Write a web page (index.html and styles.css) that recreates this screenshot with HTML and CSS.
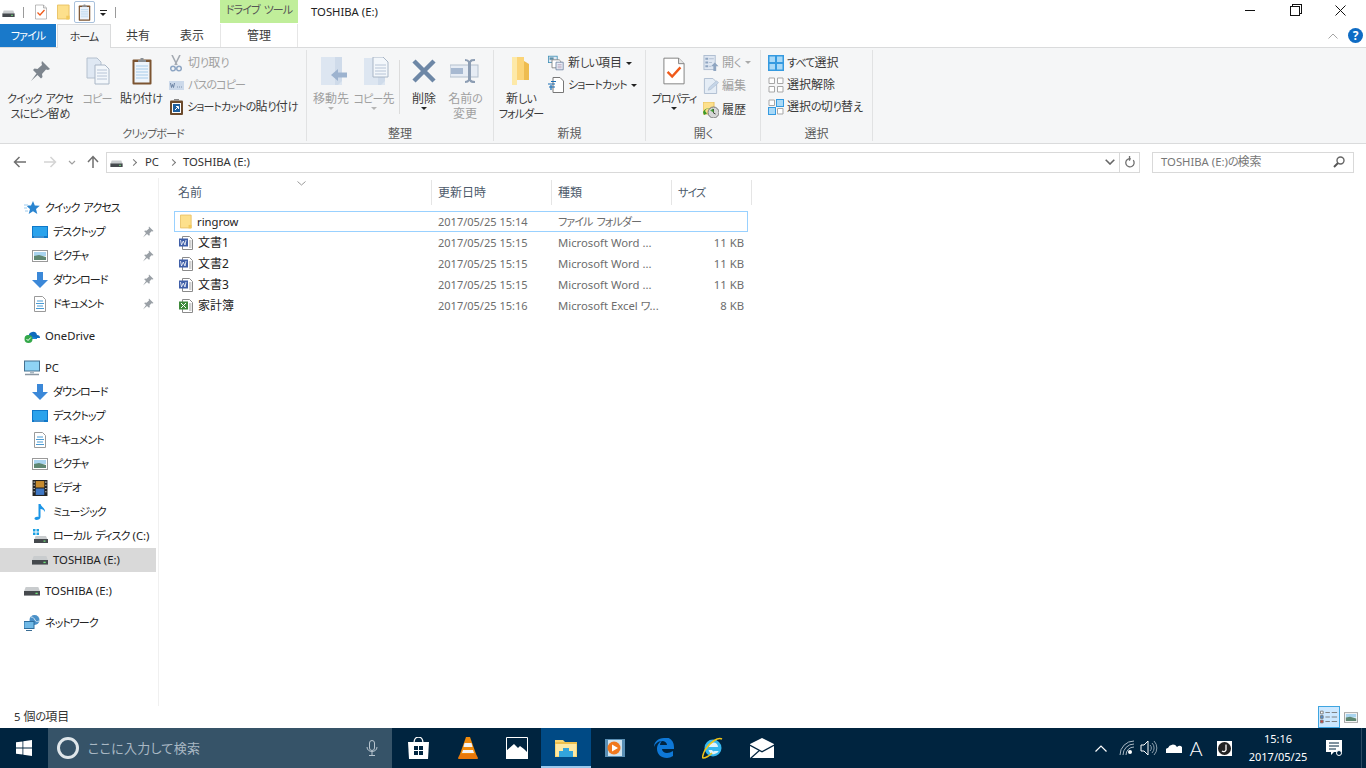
FILE: index.html
```html
<!DOCTYPE html>
<html lang="ja">
<head>
<meta charset="utf-8">
<title>TOSHIBA (E:)</title>
<link rel="stylesheet" href="styles.css">
</head>
<body>
<svg class="sprite" aria-hidden="true">
  <symbol id="drive" viewBox="0 0 14 8"><path d="M1.500 0.500h11l1.500 4H0z" fill="#c9ccce"/><rect y="4" width="14" height="4" fill="#45494d"/><rect x="10" y="5.500" width="2" height="1.200" fill="#6fe07a"/></symbol>
  <symbol id="props" viewBox="0 0 24 30"><path d="M1 1h16l6 6v22H1z" fill="#fff" stroke="#7b7b7b"/><path d="M17 1v6h6" fill="#e8e8e8" stroke="#7b7b7b"/><path d="M5 16l5 5 9-10" fill="none" stroke="#f05a1a" stroke-width="2.600"/></symbol>
  <symbol id="folder" viewBox="0 0 14 16"><path d="M.5.500h12.500v15H.5z" fill="#fde08c" stroke="#e8c060"/><path d="M10 16v-4h3.500v4z" fill="#f2c95c"/></symbol>
  <symbol id="clip" viewBox="0 0 20 28"><rect x=".5" y="2.500" width="19" height="25" rx="1" fill="#7c5431"/><rect x="2.500" y="5" width="15" height="20.500" fill="#eef5fc"/><path d="M4 9h12M4 12h12M4 15h12M4 18h12M4 21h12" stroke="#a6cbe9"/><path d="M6 5V3h2.500V1h3v2H14v2z" fill="#8a8f94"/></symbol>
  <symbol id="pin" viewBox="0 0 22 22"><path d="M13 1l8 8-2 1-2-.5-4 4.500.5 3-1.500 1.500-3.500-3.500L2 21l5.500-7.500L4 10l1.500-1.500 3 .5L13 5l-.5-2z" fill="#7d858e"/></symbol>
  <symbol id="smallpin" viewBox="0 0 12 12"><path d="M7 .5l4.500 4.500-1 .5-1-.3-2 2.300.3 1.500-.8.8L5 8 1 11.500 4 7 2.200 5.200 3 4.400l1.500.3L7 2.500 6.700 1.500z" fill="#9aa0a6"/></symbol>
  <symbol id="copy" viewBox="0 0 24 28"><path d="M1 1h10l4 4v16H1z" fill="#dfe8f3" stroke="#b4c0ce"/><path d="M9 8h10l4 4v15H9z" fill="#f3f7fb" stroke="#a9b6c6"/><path d="M11 13h10M11 16h10M11 19h10M11 22h10" stroke="#b7c4d6"/></symbol>
  <symbol id="scissors" viewBox="0 0 12 17"><path d="M2 0l5 10M10 0L5 10" stroke="#a4aab2" stroke-width="1.600" fill="none"/><circle cx="3" cy="13.500" r="2.300" fill="none" stroke="#8ea6c4" stroke-width="1.500"/><circle cx="9" cy="13.500" r="2.300" fill="none" stroke="#8ea6c4" stroke-width="1.500"/></symbol>
  <symbol id="pathcopy" viewBox="0 0 15 9"><rect width="15" height="9" fill="#ccd9ea"/><path d="M1.500 2l1 4.500 1-3 1 3 1-4.500M8 6h.8M10 6h.8M12 6h.8" stroke="#6d84a4" fill="none"/></symbol>
  <symbol id="shortcut" viewBox="0 0 13 16"><rect y="1.500" width="13" height="14.500" rx="1" fill="#6b4a2c"/><rect x="2" y="4" width="9" height="10" fill="#fff"/><path d="M4 1.500V0h5v1.500z" fill="#888"/><rect x="3" y="5" width="7" height="8" fill="#1d5f9f"/><path d="M5 11l3-3M6 7.500h2.500V10" stroke="#fff" fill="none"/></symbol>
  <symbol id="move" viewBox="0 0 26 28"><rect width="21" height="28" fill="#dde6f1"/><path d="M21 0v24l-4 4H14V0z" fill="#cfdbea"/><path d="M10 18l7-6v3.500h9v5h-9V24z" fill="#9db3cf"/></symbol>
  <symbol id="copyto" viewBox="0 0 26 28"><rect y="1" width="21" height="27" fill="#dde6f1"/><path d="M21 1v23l-4 4H14V1z" fill="#cfdbea"/><path d="M9 0h10l5 5v15H9z" fill="#f3f7fb" stroke="#a9b6c6"/><path d="M11 8h11M11 11h11M11 14h11M11 17h11" stroke="#b7c4d6"/></symbol>
  <symbol id="del" viewBox="0 0 26 26"><path d="M3 3l20 20M23 3L3 23" stroke="#6d87a6" stroke-width="4.500"/></symbol>
  <symbol id="rename" viewBox="0 0 30 26"><rect y="7" width="28" height="12" fill="#e6ecf4" stroke="#b4c0ce"/><rect x="1" y="10" width="12" height="6" fill="#a7b9d1"/><path d="M15 2c2 0 3 0 4 2v18c-1 2-2 2-4 2M25 2c-3 0-4 0-5 2v18c1 2 2 2 5 2" stroke="#8c9db3" stroke-width="2" fill="none"/></symbol>
  <symbol id="newfolder" viewBox="0 0 19 28"><path d="M1 0h12v20l5-1v4H5L1 28z" fill="#fbd477"/><path d="M1 0h5v28H1z" fill="#fde9a8"/><path d="M13 4l5 3v16h-5z" fill="#eebc4f"/></symbol>
  <symbol id="newitem" viewBox="0 0 20 18"><rect x=".5" y=".5" width="11" height="8" fill="#dfeaf5" stroke="#3f8fb6"/><rect x="2" y="2" width="5" height="3" fill="#5d8fa8"/><path d="M5 5h9l2 2v8H5z" fill="#fff" stroke="#777"/><path d="M10 8h9v9.500h-9z" fill="#e8eef6" stroke="#6a7fa0"/><path d="M12 11h5M12 13h5M12 15h5" stroke="#b7a0b7"/></symbol>
  <symbol id="scut" viewBox="0 0 16 16"><path d="M5 .5h7l3.500 3.500v11.500H5z" fill="#fff" stroke="#777"/><path d="M0 7h7M1 10h6M3 4.500h5M3 13v-5" stroke="#1b6fb5" stroke-width="1.200" fill="none"/></symbol>
  <symbol id="open" viewBox="0 0 16 17"><rect x=".5" y=".5" width="12" height="15" fill="#dfe7f2" stroke="#aebdd0"/><path d="M2 3h3v2H2zM2 7h3v2H2zM2 11h3v2H2z" fill="#8fa5c1"/><path d="M6 4h5M6 8h3M6 12h2" stroke="#aebdd0"/><path d="M12 8l4 4h-2.500v5h-3v-5H8z" fill="#8fa5c1"/></symbol>
  <symbol id="edit" viewBox="0 0 16 17"><path d="M1 .5h9l4 4v12H1z" fill="#e5edf6" stroke="#aebdd0"/><path d="M5 13l1-3 8-7 2 2-8 7z" fill="#c5d5e8" stroke="#aebdd0" stroke-width=".7"/></symbol>
  <symbol id="history" viewBox="0 0 16 16"><rect width="11" height="12" fill="#fde08c" stroke="#e8c060"/><circle cx="10.500" cy="10.500" r="5.500" fill="#d6d6d6" stroke="#777"/><path d="M10.500 7v4l2 1" stroke="#444" fill="none"/><path d="M2 9a4 4 0 0 1 7-1l-2 .5 4 2-1-4-1 1A6 6 0 0 0 0 10l1 3 3-1.500z" fill="#3c9a2c"/></symbol>
  <symbol id="selall" viewBox="0 0 16 16"><rect width="16" height="16" fill="#359ae0"/><path d="M1.500 1.500h5.500v5.500H1.500zM9 1.500h5.500v5.500H9zM1.500 9h5.500v5.500H1.500zM9 9h5.500v5.500H9z" fill="#a9d9f7"/></symbol>
  <symbol id="selnone" viewBox="0 0 16 16"><path d="M1 1h5.500v5.500H1zM9.500 1H15v5.500H9.500zM1 9.500h5.500V15H1zM9.500 9.500H15V15H9.500z" fill="#fff" stroke="#a7a7a7"/></symbol>
  <symbol id="selinv" viewBox="0 0 16 16"><path d="M1 1h5.500v5.500H1z" fill="#fff" stroke="#a7a7a7"/><rect x="8.500" y=".5" width="7" height="7" fill="#a9d9f7" stroke="#359ae0"/><rect x=".5" y="8.500" width="7" height="7" fill="#a9d9f7" stroke="#359ae0"/><path d="M9.500 9.500H15V15H9.500z" fill="#fff" stroke="#a7a7a7"/></symbol>
  <symbol id="star" viewBox="0 0 16 14"><path d="M9 0l1.800 4.500 5 .3-3.800 3.200 1.300 5L9 10.300 4.700 13l1.300-5L3 5.500 4 4.600h3z" fill="#2a85d0"/><path d="M0 4h4M0 7h3M1 10h3" stroke="#9ccbee"/></symbol>
  <symbol id="desktop" viewBox="0 0 16 12"><rect width="16" height="12" fill="#0f78c9"/><rect x="1" y="1" width="14" height="9" fill="#2ba3ec"/><path d="M2 11h10" stroke="#9bd" stroke-width=".7"/></symbol>
  <symbol id="picture" viewBox="0 0 16 12"><rect x=".5" y=".5" width="15" height="11" fill="#fff" stroke="#9a9a9a"/><rect x="2" y="2" width="12" height="4" fill="#a9d4ef"/><path d="M2 6l5-1 7 2v3H2z" fill="#5e8772"/></symbol>
  <symbol id="download" viewBox="0 0 16 16"><path d="M5 0h6v8h5l-8 8-8-8h5z" fill="#3b88d8"/></symbol>
  <symbol id="doc" viewBox="0 0 12 16"><path d="M.5.500h8l3 3v12H.5z" fill="#fff" stroke="#9a9a9a"/><path d="M3 5h6M2 7.500h8M3 10h6M2 12.500h8" stroke="#4a9bd4"/></symbol>
  <symbol id="onedrive" viewBox="0 0 16 14"><path d="M5 8a4 4 0 0 1 8-2 3 3 0 0 1 3 3H5z" fill="#0f6cbd"/><path d="M1 9a3 3 0 0 1 5-2l7 2v1H3z" fill="#1a86d6"/><circle cx="4.500" cy="10" r="4" fill="#35a84a"/><path d="M2.500 10l1.500 1.500 2.800-3" stroke="#fff" fill="none"/></symbol>
  <symbol id="pc" viewBox="0 0 16 15"><rect x=".5" y=".5" width="15" height="10" fill="#8fd3f5" stroke="#45708f"/><path d="M1 14h14" stroke="#8a97a3" stroke-width="1.500"/><rect x="6" y="11" width="4" height="2" fill="#a9b7c2"/></symbol>
  <symbol id="video" viewBox="0 0 14 15"><rect width="14" height="15" fill="#232323"/><rect x="3" y="1" width="8" height="6" fill="#c78b2e"/><rect x="3" y="8" width="8" height="6" fill="#3f77c4"/><path d="M1 2h1M1 5h1M1 8h1M1 11h1M12 2h1M12 5h1M12 8h1M12 11h1" stroke="#fff"/></symbol>
  <symbol id="music" viewBox="0 0 12 16"><path d="M4.500 0h2c.5 3 5 4 4.500 8-1-2-2.500-3-4.500-3v8c0 2-2 3-4 3S0 14.500 1 13.500s2.500-1 3.500-.5z" fill="#1c95e6"/></symbol>
  <symbol id="cdrive" viewBox="0 0 16 14"><path d="M1 0h2.500v2.500H1zM4.500 0H7v2.500H4.500zM1 3.500h2.500V6H1zM4.500 3.500H7V6H4.500z" fill="#1ba0e2"/><path d="M3.500 7H14l1.500 3.500h-13z" fill="#c9ccce"/><rect x="2" y="10" width="14" height="4" fill="#45494d"/><rect x="11.500" y="11.500" width="2" height="1.200" fill="#6fe07a"/></symbol>
  <symbol id="network" viewBox="0 0 16 16"><circle cx="10.500" cy="5" r="5" fill="#4a90c8"/><path d="M7 2c2 0 3 1 4 3s2 2 4 1" stroke="#cfe3f2" fill="none"/><rect y="6.500" width="10" height="7" fill="#70b9e6" stroke="#2d6d9d"/><path d="M2 15.500h6" stroke="#3a6d94"/></symbol>
  <symbol id="word" viewBox="0 0 14 14"><path d="M3.500.5h7l3 3v10h-10z" fill="#fff" stroke="#8a8a8a"/><path d="M10 5h2.500M10 7h2.500M10 9h2.500M10 11h2.500" stroke="#a0a0a0"/><rect y="2.500" width="9" height="8" fill="#3f5fa8"/><path d="M1.500 4l1 5 1.800-4 1.700 4 1-5" stroke="#fff" fill="none" stroke-width=".8"/></symbol>
  <symbol id="excel" viewBox="0 0 14 14"><path d="M3.500.5h7l3 3v10h-10z" fill="#fff" stroke="#8a8a8a"/><path d="M10 5h2.500M10 7h2.500M10 9h2.500M10 11h2.500" stroke="#a0a0a0"/><rect y="2.500" width="9" height="8" fill="#3f8a3c"/><path d="M2 4l5 5M7 4L2 9" stroke="#fff"/></symbol>
  <symbol id="win" viewBox="0 0 16 16"><path d="M0 2.300l6.500-.9v6.200H0zM7.300 1.300L16 0v7.600H7.300zM0 8.400h6.500v6.200L0 13.700zM7.300 8.400H16V16l-8.700-1.300z" fill="#fff"/></symbol>
  <symbol id="mic" viewBox="0 0 12 16"><rect x="3.500" y=".5" width="5" height="10" rx="2.500" fill="none" stroke="#b8c5cf"/><path d="M1 7c0 6 10 6 10 0M6 12v3.500M3 15.500h6" stroke="#b8c5cf" fill="none"/></symbol>
  <symbol id="store" viewBox="0 0 21 22"><path d="M0 5h21l-1 17H1z" fill="#fff"/><path d="M6 6c0-8 9-8 9 0" fill="none" stroke="#fff" stroke-width="1.300"/><path d="M6 9h4v4H6zM11 9h4v4h-4zM6 14h4v4H6zM11 14h4v4h-4z" fill="#00243f"/></symbol>
  <symbol id="vlc" viewBox="0 0 20 22"><path d="M8 0h4l6 17H2z" fill="#f08a0c"/><path d="M6.500 6h7l1 4h-9zM5 13h10l1 3H4z" fill="#f3f3f3"/><path d="M2 17h16l2 4q0 1-1 1H1q-1 0-1-1z" fill="#e8780a"/></symbol>
  <symbol id="photos" viewBox="0 0 22 22"><path d="M.5.500h21v21H.5z" fill="none" stroke="#fff"/><path d="M0 22V14l8-7 4 4 2-2 4 3 4 4v6z" fill="#fff"/></symbol>
  <symbol id="explorer" viewBox="0 0 22 18"><path d="M0 1h8l2 2h12v15H0z" fill="#fad773"/><rect y="3" width="22" height="2" fill="#edc04f"/><rect x="1" y="5" width="20" height="12" fill="#fde9a5"/><path d="M8 9h6v3h4v6H4v-6h4z" fill="#33a4dc"/></symbol>
  <symbol id="wmp" viewBox="0 0 20 18"><rect width="20" height="18" fill="#5a8fb4"/><rect x="3" y="1" width="14" height="16" fill="#cfe3ef"/><circle cx="9" cy="9" r="6.500" fill="#f0781e"/><path d="M7 5.500l6 3.500-6 3.500z" fill="#fff"/></symbol>
  <symbol id="edge" viewBox="0 0 20 20"><path d="M10 0C4 0 0 4 0 9c1-3 4-6 8-6 3 0 5 2 5 4H6c0-2 1-3 2-4-3 1-5 4-5 8 0 5 4 9 10 9 2 0 4-1 6-2v-5c-2 1-4 2-6 2-3 0-5-2-5-4h12v-2c0-6-4-10-10-10z" fill="#0e78d7"/></symbol>
  <symbol id="ie" viewBox="0 0 22 22"><circle cx="11" cy="11" r="8.500" fill="#35b7ef"/><path d="M7 10h9a4.500 4.500 0 0 0-9 0zM6.500 13c1 3 3 5 6 4s4-2 4-3h-4c-1 1-2 0-2.500-1z" fill="#dff3fb"/><path d="M20 2c-4-2-12 3-17 11-2 4-3 8-2 8s5-1 9-5" fill="none" stroke="#f0c418" stroke-width="1.500"/></symbol>
  <symbol id="mail" viewBox="0 0 24 20"><path d="M12 0l12 6v.5L12 13 0 6.500V6z" fill="#fff"/><path d="M0 8l12 6.500L24 8v12H0z" fill="#fff"/><path d="M0 20l9-8 1 .7L2 20z" fill="#00243f"/></symbol>
  <symbol id="wifi" viewBox="0 0 16 16"><path d="M1 15a14 14 0 0 1 14-14M4 15A11 11 0 0 1 15 4M7 15a8 8 0 0 1 8-8" stroke="#aab8c4" fill="none"/><circle cx="11" cy="12" r="2" fill="#fff"/></symbol>
  <symbol id="speaker" viewBox="0 0 18 16"><path d="M1 5h3l4-4v14l-4-4H1z" fill="none" stroke="#fff"/><path d="M10 5a4 4 0 0 1 0 6M12 3a7 7 0 0 1 0 10M14 1a10 10 0 0 1 0 14" stroke="#8ea0ae" fill="none"/></symbol>
  <symbol id="cloud" viewBox="0 0 16 10"><path d="M0 10a3 3 0 0 1 2-5 5 5 0 0 1 9-1 3 3 0 0 1 5 6z" fill="#fff"/></symbol>
  <symbol id="jicon" viewBox="0 0 15 15"><rect width="15" height="15" fill="#fff"/><circle cx="7.500" cy="7.500" r="6.500" fill="#222"/><path d="M9 3.500V9a2.500 2.500 0 0 1-4 1" stroke="#fff" stroke-width="1.300" fill="none"/></symbol>
  <symbol id="notify" viewBox="0 0 16 16"><path d="M0 0h16v12H8l-3 3v-3H0z" fill="#fff"/><path d="M3 3h10M3 6h10M3 9h7" stroke="#00243f"/><circle cx="13" cy="13" r="2.500" fill="#00243f" stroke="#fff"/></symbol>
  <symbol id="details" viewBox="0 0 20 14"><path d="M.5.500h3v3h-3z" fill="#fff" stroke="#777"/><path d="M.5 5.500h3v3h-3z" fill="#4a90d9" stroke="#777"/><path d="M.5 10.500h3v3h-3z" fill="#d9403a" stroke="#777"/><path d="M6 2h5M13 2h6M6 7h5M13 7h6M6 12h5M13 12h6" stroke="#777"/></symbol>
</svg>

<div class="screen">
  <div class="window">
    <header class="titlebar">
      <div class="qat">
        <svg class="ic qat-drive"><use href="#drive"/></svg>
        <span class="qat-sep"></span>
        <svg class="ic qat-props"><use href="#props"/></svg>
        <svg class="ic qat-folder"><use href="#folder"/></svg>
        <span class="qat-active"><svg class="ic qat-clip"><use href="#clip"/></svg></span>
        <span class="qat-more"></span>
        <span class="qat-sep"></span>
      </div>
      <div class="ctx-head k">ドライブ ツール</div>
      <div class="win-title">TOSHIBA (E:)</div>
      <div class="win-controls">
        <span class="min"></span>
        <span class="max"></span>
        <svg class="ic close" viewBox="0 0 11 11"><path d="M.5.500l10 10M10.500.500l-10 10" stroke="#111" fill="none"/></svg>
      </div>
    </header>

    <nav class="tabs">
      <div class="tab tab-file k">ファイル</div>
      <div class="tab tab-home k">ホーム</div>
      <div class="tab tab-share j">共有</div>
      <div class="tab tab-view j">表示</div>
      <div class="tab tab-manage j">管理</div>
      <div class="tabs-right">
        <svg class="ic caret-up" viewBox="0 0 10 6"><path d="M.5 5.500L5 1l4.500 4.500" fill="none" stroke="#a5a5a5"/></svg>
        <span class="help">?</span>
      </div>
    </nav>

    <section class="ribbon">
      <div class="group g-clip">
        <div class="group-body">
          <div class="big w-pin"><svg class="ic i-pin"><use href="#pin"/></svg><span class="big-label"><span class="k">クイック アクセ</span><br><span class="k">スにピン</span><span class="j">留</span><span class="k">め</span></span></div>
          <div class="big w-copy off"><svg class="ic i-copy"><use href="#copy"/></svg><span class="big-label k">コピー</span></div>
          <div class="big w-paste"><svg class="ic i-clip"><use href="#clip"/></svg><span class="big-label"><span class="j">貼</span><span class="k">り</span><span class="j">付</span><span class="k">け</span></span></div>
          <div class="stack s-clip">
            <div class="small off"><svg class="ic i-sc"><use href="#scissors"/></svg><span class="j">切</span><span class="k">り</span><span class="j">取</span><span class="k">り</span></div>
            <div class="small off"><svg class="ic i-pc"><use href="#pathcopy"/></svg><span class="k">パスのコピー</span></div>
            <div class="small"><svg class="ic i-sh"><use href="#shortcut"/></svg><span class="k">ショートカットの</span><span class="j">貼</span><span class="k">り</span><span class="j">付</span><span class="k">け</span></div>
          </div>
        </div>
        <div class="group-label k">クリップボード</div>
      </div>

      <div class="group g-org">
        <div class="group-body">
          <div class="big w-move off"><svg class="ic i-move"><use href="#move"/></svg><span class="big-label j">移動先</span><span class="arrow"></span></div>
          <div class="big w-copyto off"><svg class="ic i-move"><use href="#copyto"/></svg><span class="big-label"><span class="k">コピー</span><span class="j">先</span></span><span class="arrow"></span></div>
          <span class="divider"></span>
          <div class="big w-del"><svg class="ic i-del"><use href="#del"/></svg><span class="big-label j">削除</span><span class="arrow dark"></span></div>
          <div class="big w-ren off"><svg class="ic i-ren"><use href="#rename"/></svg><span class="big-label"><span class="j">名前</span><span class="k">の</span><br><span class="j">変更</span></span></div>
        </div>
        <div class="group-label j">整理</div>
      </div>

      <div class="group g-new">
        <div class="group-body">
          <div class="big w-newf"><svg class="ic i-newf"><use href="#newfolder"/></svg><span class="big-label"><span class="j">新</span><span class="k">しい</span><br><span class="k">フォルダー</span></span></div>
          <div class="stack s-new">
            <div class="small"><svg class="ic i-ni"><use href="#newitem"/></svg><span class="j">新</span><span class="k">しい</span><span class="j">項目</span><span class="drop"></span></div>
            <div class="small"><svg class="ic i-ni"><use href="#scut"/></svg><span class="k">ショートカット</span><span class="drop"></span></div>
          </div>
        </div>
        <div class="group-label j">新規</div>
      </div>

      <div class="group g-open">
        <div class="group-body">
          <div class="big w-prop"><svg class="ic i-prop"><use href="#props"/></svg><span class="big-label k">プロパティ</span><span class="arrow dark"></span></div>
          <div class="stack s-open">
            <div class="small tall off"><svg class="ic i-op"><use href="#open"/></svg><span class="j">開</span><span class="k">く</span><span class="drop light"></span></div>
            <div class="small tall off"><svg class="ic i-op"><use href="#edit"/></svg><span class="j">編集</span></div>
            <div class="small tall"><svg class="ic i-op"><use href="#history"/></svg><span class="j">履歴</span></div>
          </div>
        </div>
        <div class="group-label"><span class="j">開</span><span class="k">く</span></div>
      </div>

      <div class="group g-sel">
        <div class="group-body">
          <div class="stack s-sel">
            <div class="small"><svg class="ic i-sel"><use href="#selall"/></svg><span class="k">すべて</span><span class="j">選択</span></div>
            <div class="small"><svg class="ic i-sel"><use href="#selnone"/></svg><span class="j">選択解除</span></div>
            <div class="small"><svg class="ic i-sel"><use href="#selinv"/></svg><span class="j">選択</span><span class="k">の</span><span class="j">切</span><span class="k">り</span><span class="j">替</span><span class="k">え</span></div>
          </div>
        </div>
        <div class="group-label j">選択</div>
      </div>
    </section>

    <section class="addressbar">
      <svg class="ic nav-back" viewBox="0 0 14 12"><path d="M13 6H2M6.500 1L1.500 6l5 5" fill="none" stroke="#6f6f6f" stroke-width="1.500"/></svg>
      <svg class="ic nav-fwd" viewBox="0 0 14 12"><path d="M1 6h11M7.500 1l5 5-5 5" fill="none" stroke="#d4d4d4" stroke-width="1.500"/></svg>
      <svg class="ic nav-down" viewBox="0 0 8 5"><path d="M1 1l3 3 3-3" fill="none" stroke="#a0a0a0" stroke-width="1.200"/></svg>
      <svg class="ic nav-up" viewBox="0 0 12 14"><path d="M6 13V2M1 7l5-5.500L11 7" fill="none" stroke="#6f6f6f" stroke-width="1.500"/></svg>
      <div class="path">
        <svg class="ic path-drive"><use href="#drive"/></svg>
        <span class="crumb-sep"></span><span class="crumb">PC</span>
        <span class="crumb-sep"></span><span class="crumb">TOSHIBA (E:)</span>
        <span class="path-end">
          <svg class="ic path-chev" viewBox="0 0 10 6"><path d="M.7 .7L5 5 9.300 .7" fill="none" stroke="#666" stroke-width="1.600"/></svg>
          <span class="path-refbox"><svg class="ic path-ref" viewBox="0 0 12 14"><path d="M9.500 4.500a4.500 4.500 0 1 1-5-1.500h2.500M5.500 0v5" fill="none" stroke="#6f6f6f" stroke-width="1.400"/></svg></span>
        </span>
      </div>
      <div class="search">
        <span>TOSHIBA (E:)<span class="k">の</span><span class="j">検索</span></span>
        <svg class="ic search-ic" viewBox="0 0 12 12"><circle cx="7.500" cy="4.500" r="3.500" fill="none" stroke="#666" stroke-width="1.400"/><path d="M5 7l-4 4" stroke="#555" stroke-width="2"/></svg>
      </div>
    </section>

    <main class="main">
      <aside class="sidebar">
        <div class="nav-group g1">
          <div class="nav top"><svg class="ic n-ic"><use href="#star"/></svg><span class="k">クイック アクセス</span></div>
          <div class="nav"><svg class="ic n-ic"><use href="#desktop"/></svg><span class="k">デスクトップ</span><svg class="ic n-pin"><use href="#smallpin"/></svg></div>
          <div class="nav"><svg class="ic n-ic"><use href="#picture"/></svg><span class="k">ピクチャ</span><svg class="ic n-pin"><use href="#smallpin"/></svg></div>
          <div class="nav"><svg class="ic n-ic"><use href="#download"/></svg><span class="k">ダウンロード</span><svg class="ic n-pin"><use href="#smallpin"/></svg></div>
          <div class="nav"><svg class="ic n-ic"><use href="#doc"/></svg><span class="k">ドキュメント</span><svg class="ic n-pin"><use href="#smallpin"/></svg></div>
        </div>
        <div class="nav-group g1">
          <div class="nav top"><svg class="ic n-ic"><use href="#onedrive"/></svg>OneDrive</div>
        </div>
        <div class="nav-group g3">
          <div class="nav top"><svg class="ic n-ic"><use href="#pc"/></svg>PC</div>
          <div class="nav"><svg class="ic n-ic"><use href="#download"/></svg><span class="k">ダウンロード</span></div>
          <div class="nav"><svg class="ic n-ic"><use href="#desktop"/></svg><span class="k">デスクトップ</span></div>
          <div class="nav"><svg class="ic n-ic"><use href="#doc"/></svg><span class="k">ドキュメント</span></div>
          <div class="nav"><svg class="ic n-ic"><use href="#picture"/></svg><span class="k">ピクチャ</span></div>
          <div class="nav"><svg class="ic n-ic"><use href="#video"/></svg><span class="k">ビデオ</span></div>
          <div class="nav"><svg class="ic n-ic"><use href="#music"/></svg><span class="k">ミュージック</span></div>
          <div class="nav"><svg class="ic n-ic"><use href="#cdrive"/></svg><span class="k">ローカル ディスク</span>&nbsp;(C:)</div>
          <div class="nav selected"><svg class="ic n-ic"><use href="#drive"/></svg>TOSHIBA (E:)</div>
        </div>
        <div class="nav-group g1">
          <div class="nav top"><svg class="ic n-ic"><use href="#drive"/></svg>TOSHIBA (E:)</div>
        </div>
        <div class="nav-group">
          <div class="nav top"><svg class="ic n-ic"><use href="#network"/></svg><span class="k">ネットワーク</span></div>
        </div>
      </aside>

      <div class="content">
        <svg class="ic sort" viewBox="0 0 9 5"><path d="M.5.500L4.500 4 8.500.500" fill="none" stroke="#999"/></svg>
        <div class="head-row">
          <div class="hcol h-name"><span class="j">名前</span></div>
          <div class="hcol h-date"><span class="j">更新日時</span></div>
          <div class="hcol h-kind"><span class="j">種類</span></div>
          <div class="hcol h-size"><span class="k">サイズ</span></div>
        </div>
        <div class="rows">
          <div class="row focus"><div class="c-name"><svg class="ic f-ic f-folder"><use href="#folder"/></svg>ringrow</div><div class="c-date">2017/05/25 15:14</div><div class="c-kind"><span class="k">ファイル フォルダー</span></div><div class="c-size"></div></div>
          <div class="row"><div class="c-name"><svg class="ic f-ic"><use href="#word"/></svg><span class="j">文書1</span></div><div class="c-date">2017/05/25 15:15</div><div class="c-kind">Microsoft Word ...</div><div class="c-size">11 KB</div></div>
          <div class="row"><div class="c-name"><svg class="ic f-ic"><use href="#word"/></svg><span class="j">文書2</span></div><div class="c-date">2017/05/25 15:15</div><div class="c-kind">Microsoft Word ...</div><div class="c-size">11 KB</div></div>
          <div class="row"><div class="c-name"><svg class="ic f-ic"><use href="#word"/></svg><span class="j">文書3</span></div><div class="c-date">2017/05/25 15:15</div><div class="c-kind">Microsoft Word ...</div><div class="c-size">11 KB</div></div>
          <div class="row"><div class="c-name"><svg class="ic f-ic"><use href="#excel"/></svg><span class="j">家計簿</span></div><div class="c-date">2017/05/25 15:16</div><div class="c-kind">Microsoft Excel <span class="k">ワ</span>...</div><div class="c-size">8 KB</div></div>
        </div>
      </div>
    </main>

    <footer class="status">
      <span class="status-text">5 <span class="j">個</span><span class="k">の</span><span class="j">項目</span></span>
      <span class="status-sep"></span>
      <span class="view-btn active"><svg class="ic v-det"><use href="#details"/></svg></span>
      <span class="view-btn"><svg class="ic v-thumb"><use href="#picture"/></svg></span>
    </footer>
  </div>

  <div class="taskbar">
    <div class="start"><svg class="ic t-win"><use href="#win"/></svg></div>
    <div class="tsearch">
      <span class="cortana"></span>
      <span class="tsearch-text">ここに入力して検索</span>
      <svg class="ic t-mic"><use href="#mic"/></svg>
    </div>
    <div class="apps">
      <div class="app"><svg class="ic a-store"><use href="#store"/></svg></div>
      <div class="app"><svg class="ic a-vlc"><use href="#vlc"/></svg></div>
      <div class="app"><svg class="ic a-photos"><use href="#photos"/></svg></div>
      <div class="app current"><svg class="ic a-exp"><use href="#explorer"/></svg></div>
      <div class="app"><svg class="ic a-wmp"><use href="#wmp"/></svg></div>
      <div class="app"><svg class="ic a-edge"><use href="#edge"/></svg></div>
      <div class="app"><svg class="ic a-ie"><use href="#ie"/></svg></div>
      <div class="app"><svg class="ic a-mail"><use href="#mail"/></svg></div>
    </div>
    <div class="tray">
      <svg class="ic tr-chev" viewBox="0 0 12 7"><path d="M.5 6.500L6 1l5.500 5.500" fill="none" stroke="#fff" stroke-width="1.200"/></svg>
      <svg class="ic tr-wifi"><use href="#wifi"/></svg>
      <svg class="ic tr-spk"><use href="#speaker"/></svg>
      <svg class="ic tr-cloud"><use href="#cloud"/></svg>
      <span class="tr-a">A</span>
      <svg class="ic tr-j"><use href="#jicon"/></svg>
      <div class="clock"><span>15:16</span><span>2017/05/25</span></div>
      <svg class="ic tr-note"><use href="#notify"/></svg>
      <span class="show-desk"></span>
    </div>
  </div>
</div>
</body>
</html>
```

FILE: styles.css
```css
* { box-sizing: border-box; }
html, body { margin: 0; padding: 0; overflow: hidden; background: #fff; }
body {
  font: 11.300px/16px "Noto Sans", "Noto Sans CJK JP", sans-serif;
  font-feature-settings: "palt";
  color: #2a2a2a;
}
.k { font-size: 11px; letter-spacing: -.9px; word-spacing: 2px; }
.j { font-size: 12px; }
.sprite { position: absolute; width: 0; height: 0; overflow: hidden; }
.ic { display: block; flex: none; }
.screen { width: 1366px; height: 768px; display: flex; flex-direction: column; }
.window { height: 728px; display: flex; flex-direction: column; }

/* title bar */
.titlebar { height: 24px; display: flex; align-items: stretch; }
.qat { width: 220px; display: flex; align-items: center; padding-left: 2px; }
.qat-drive { width: 13px; height: 7px; margin-top: 3px; }
.qat-sep { width: 1px; height: 11px; background: #9a9a9a; margin-left: 8px; }
.qat-props { width: 12px; height: 16px; margin-left: 11px; }
.qat-folder { width: 13px; height: 16px; margin-left: 10px; }
.qat-active { width: 21px; height: 22px; margin-left: 4px; border: 1px solid #a9c1dc; border-radius: 2px; display: flex; align-items: center; justify-content: center; }
.qat-clip { width: 13px; height: 17px; }
.qat-more { width: 7px; height: 6px; margin-left: 5px; margin-top: 2px; border-top: 1px solid #222; }
.qat-more::after { content: ""; display: block; margin-top: 2px; width: 0; border: 3.500px solid transparent; border-top-color: #222; border-bottom-width: 0; }
.ctx-head { width: 78px; height: 23px; background: #c0ee9a; color: #555; text-align: center; line-height: 19px; flex: none; }
.win-title { flex: 1; padding-left: 13px; line-height: 23px; color: #222; }
.win-controls { display: flex; align-items: center; padding-right: 20px; }
.min { width: 10px; height: 1px; background: #111; margin-right: 35px; margin-top: -3px; }
.max { width: 10px; height: 10px; border: 1px solid #111; margin-right: 35px; margin-top: -3px; box-shadow: 2px -2px 0 -1px #fff, 2px -2px 0 0 #111; }
.close { width: 11px; height: 11px; margin-top: -3px; }

/* tabs */
.tabs { height: 24px; display: flex; border-bottom: 1px solid #dadbdc; }
.tab { height: 23px; text-align: center; line-height: 23px; color: #3c3c3c; flex: none; }
.tab-file { width: 56px; background: #1979ca; color: #fff; }
.tab-home { width: 54px; margin-left: 1px; height: 24px; background: #f5f6f7; border: 1px solid #dadbdc; border-bottom: 0; }
.tab-share { width: 54px; }
.tab-view { width: 54px; }
.tab-manage { width: 78px; margin-left: 1px; border: 1px solid #e6e6e6; border-top: 0; border-bottom: 0; }
.tabs-right { margin-left: auto; display: flex; align-items: center; padding-right: 3px; height: 23px; }
.caret-up { width: 10px; height: 6px; margin-right: 10px; }
.help { width: 15px; height: 15px; border-radius: 50%; background: #0f6cc4; color: #fff; font-weight: 700; font-size: 12px; line-height: 15px; text-align: center; }

/* ribbon */
.ribbon { height: 96px; background: #f5f6f7; border-bottom: 1px solid #dadbdc; display: flex; padding-bottom: 2px; }
.group { display: flex; flex-direction: column; border-right: 1px solid #e1e2e3; margin-top: 2px; height: 91px; flex: none; }
.group-body { flex: 1; display: flex; padding-top: 2px; }
.group-label { height: 17px; text-align: center; color: #5c5c5c; line-height: 19px; }
.g-clip { width: 307px; }
.g-clip .group-body, .g-org .group-body { padding-left: 4px; }
.g-org { width: 187px; }
.g-new { width: 152px; }
.g-open { width: 115px; }
.g-sel { width: 112px; }
.big { display: flex; flex-direction: column; align-items: center; color: #3a3a3a; line-height: 15px; flex: none; }
.big-label { text-align: center; display: block; white-space: nowrap; }
.big .ic { margin-top: 5px; margin-bottom: 6px; }
.big.off, .small.off { color: #a0a0a0; }
.w-pin { width: 72px; }
.w-copy { width: 42px; }
.w-paste { width: 46px; }
.big .i-pin { width: 22px; height: 22px; margin-top: 8px; margin-bottom: 9px; }
.i-copy { width: 24px; height: 28px; margin-left: 2px; }
.big .i-clip { width: 20px; height: 28px; margin-left: 2px; }
.w-move { width: 40px; }
.w-copyto { width: 46px; }
.big .i-move { width: 26px; height: 28px; margin-left: 6px; }
.divider { width: 1px; height: 54px; background: #dcdcdc; margin: 8px 4px 0 2px; flex: none; }
.w-del { width: 40px; }
.w-ren { width: 42px; }
.big .i-del { width: 26px; height: 26px; margin-top: 6px; margin-bottom: 7px; }
.big .i-ren { width: 30px; height: 26px; margin-top: 6px; margin-bottom: 7px; }
.arrow { width: 0; height: 0; border: 3.500px solid transparent; border-top-color: #b5b5b5; border-bottom-width: 0; margin-top: 1px; }
.arrow.dark { border-top-color: #222; }
.w-newf { width: 54px; }
.big .i-newf { width: 19px; height: 28px; margin-right: 2px; }
.w-prop { width: 56px; }
.big .i-prop { width: 22px; height: 28px; margin-top: 5px; margin-bottom: 6px; }
.stack { display: flex; flex-direction: column; }
.small { height: 22px; display: flex; align-items: center; white-space: nowrap; color: #3a3a3a; }
.small.tall { height: 23.500px; }
.s-clip { margin-left: 5px; }
.s-open { margin-top: -1px; margin-left: 1px; }
.s-sel { margin-left: 7px; }
.i-sc { width: 12px; height: 17px; margin: 0 6px 0 1px; }
.i-pc { width: 15px; height: 9px; margin: 0 4px 0 0; }
.i-sh { width: 13px; height: 16px; margin: 0 4px 0 1px; }
.i-ni { width: 16px; height: 16px; margin-right: 4px; }
.i-op { width: 16px; height: 16px; margin-right: 3px; }
.i-sel { width: 16px; height: 16px; margin-right: 3px; }
.drop { width: 0; height: 0; margin-left: 4px; border: 3px solid transparent; border-top-color: #222; border-bottom-width: 0; }
.drop.light { border-top-color: #aaa; }

/* address bar */
.addressbar { height: 34px; display: flex; align-items: center; padding-top: 2px; padding-left: 13px; }
.nav-back { width: 14px; height: 12px; }
.nav-fwd { width: 14px; height: 12px; margin-left: 16px; }
.nav-down { width: 8px; height: 5px; margin-left: 11px; }
.nav-up { width: 12px; height: 14px; margin-left: 11px; }
.path { width: 1034px; height: 21px; margin-left: 7px; border: 1px solid #d9d9d9; display: flex; align-items: center; padding-left: 3px; color: #333; }
.path-drive { width: 13px; height: 7px; margin-top: 2px; }
.crumb-sep { width: 5px; height: 5px; border-top: 1px solid #777; border-right: 1px solid #777; transform: rotate(45deg); margin: 0 9px 0 8px; }
.crumb-sep + .crumb + .crumb-sep { margin-left: 11px; margin-right: 8px; }
.path-end { margin-left: auto; display: flex; align-items: center; height: 19px; }
.path-chev { width: 10px; height: 6px; margin-right: 4px; }
.path-refbox { width: 20px; height: 19px; border-left: 1px solid #d9d9d9; display: flex; align-items: center; justify-content: center; }
.path-ref { width: 12px; height: 13px; }
.search { width: 202px; height: 21px; margin-left: 12px; border: 1px solid #d9d9d9; display: flex; align-items: center; padding: 0 8px; color: #777; justify-content: space-between; }
.search-ic { width: 12px; height: 12px; }

/* main */
.main { flex: 1; display: flex; min-height: 0; }
.sidebar { width: 159px; border-right: 1px solid #f0f0f0; padding-top: 18px; flex: none; }
.nav-group.g1 { margin-bottom: 8px; }
.nav-group.g3 { margin-bottom: 7px; }
.nav { width: 156px; height: 24px; display: flex; align-items: center; padding-left: 32px; color: #222; white-space: nowrap; }
.nav.top { padding-left: 24px; }
.n-ic { width: 16px; height: 16px; margin-right: 5px; }
.n-pin { width: 12px; height: 12px; margin-left: auto; margin-right: 2px; }
.nav.selected { background: #d9d9d9; }
.content { flex: 1; position: relative; padding-left: 13px; }
.sort { position: absolute; left: 138px; top: 3px; width: 9px; height: 5px; }
.head-row { display: grid; grid-template-columns: 260px 120px 120px 80px; height: 27px; margin-top: 2px; }
.hcol { border-right: 1px solid #e5e5e5; padding-left: 6px; line-height: 26px; color: #4d5a6b; height: 25px; }
.rows { padding-left: 2px; margin-top: 4px; }
.row { display: grid; grid-template-columns: 258px 120px 120px 76px; width: 574px; height: 21px; align-items: center; line-height: 19px; border: 1px solid transparent; }
.row.focus { border-color: #99d1ff; }
.c-name { display: flex; align-items: center; padding-left: 4px; color: #222; }
.f-ic { width: 14px; height: 14px; margin-right: 5px; }
.f-folder { width: 12px; height: 15px; margin-left: 1px; }
.c-date, .c-kind { color: #6d6d6d; padding-left: 5px; white-space: nowrap; }
.c-date { font-size: 11px; }
.c-size { color: #6d6d6d; text-align: right; padding-right: 5px; }

/* status */
.status { height: 22px; display: flex; align-items: center; padding-left: 14px; padding-right: 8px; color: #333; }
.status-sep { margin-left: auto; }
.view-btn { height: 22px; display: flex; align-items: center; justify-content: center; width: 22px; }
.view-btn + .view-btn { margin-left: 4px; width: 14px; }
.view-btn.active { background: #cde8ff; border: 1px solid #3fa5e0; }
.v-det { width: 18px; height: 14px; }
.v-thumb { width: 14px; height: 11px; }

/* taskbar */
.taskbar { height: 40px; background: #00243f; display: flex; color: #fff; }
.start { width: 48px; display: flex; align-items: center; justify-content: center; }
.t-win { width: 16px; height: 16px; }
.tsearch { width: 344px; background: #365368; display: flex; align-items: center; padding-left: 9px; color: #a9b8c4; font-size: 13px; }
.cortana { width: 22px; height: 22px; border-radius: 50%; border: 3px solid #dfe6ea; }
.tsearch-text { margin-left: 9px; letter-spacing: .3px; }
.t-mic { width: 12px; height: 16px; margin-left: auto; margin-right: 14px; }
.apps { display: flex; margin-left: 2px; }
.app { width: 49.140px; display: flex; align-items: center; justify-content: center; }
.app.current { background: #004a85; border-bottom: 2px solid #99c9ee; padding-top: 2px; }
.a-store { width: 21px; height: 22px; }
.a-vlc { width: 20px; height: 22px; }
.a-photos { width: 22px; height: 22px; }
.a-exp { width: 22px; height: 18px; }
.a-wmp { width: 20px; height: 18px; }
.a-edge { width: 20px; height: 20px; }
.a-ie { width: 22px; height: 22px; }
.a-mail { width: 24px; height: 20px; }
.tray { flex: 1; display: flex; align-items: center; padding-left: 308px; }
.tr-chev { width: 12px; height: 7px; }
.tr-wifi { width: 16px; height: 16px; margin-left: 12px; }
.tr-spk { width: 18px; height: 16px; margin-left: 5px; }
.tr-cloud { width: 16px; height: 10px; margin-left: 8px; }
.tr-a { font-size: 20px; font-weight: 300; margin-left: 8px; width: 12px; display: flex; justify-content: center; font-family: "Lato", "Open Sans", sans-serif; }
.tr-j { width: 15px; height: 15px; margin-left: 15px; }
.clock { width: 76px; margin-left: 8px; display: flex; flex-direction: column; align-items: center; line-height: 18px; font-size: 11px; }
.tr-note { width: 16px; height: 16px; margin-left: 10px; }
.show-desk { width: 1px; height: 40px; background: #2b4a62; margin-left: auto; margin-right: 4px; }
```
